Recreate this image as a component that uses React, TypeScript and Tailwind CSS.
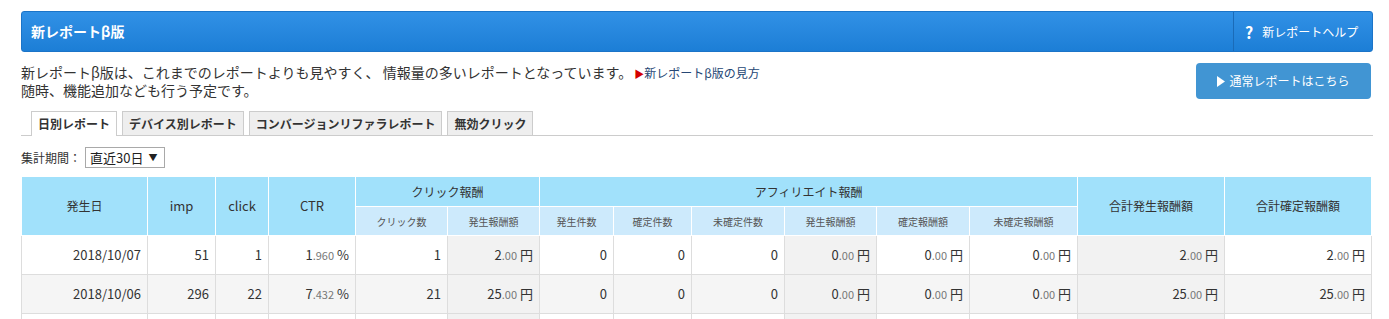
import React from "react";

type Row = {
  date: string;
  imp: string;
  click: string;
  ctr: [string, string];
  cc: string;
  cAmt: [string, string];
  a1: string;
  a2: string;
  a3: string;
  aAmt1: [string, string];
  aAmt2: [string, string];
  aAmt3: [string, string];
  tot1: [string, string];
  tot2: [string, string];
};

const rows: Row[] = [
  {
    date: "2018/10/07",
    imp: "51",
    click: "1",
    ctr: ["1", "960"],
    cc: "1",
    cAmt: ["2", "00"],
    a1: "0",
    a2: "0",
    a3: "0",
    aAmt1: ["0", "00"],
    aAmt2: ["0", "00"],
    aAmt3: ["0", "00"],
    tot1: ["2", "00"],
    tot2: ["2", "00"],
  },
  {
    date: "2018/10/06",
    imp: "296",
    click: "22",
    ctr: ["7", "432"],
    cc: "21",
    cAmt: ["25", "00"],
    a1: "0",
    a2: "0",
    a3: "0",
    aAmt1: ["0", "00"],
    aAmt2: ["0", "00"],
    aAmt3: ["0", "00"],
    tot1: ["25", "00"],
    tot2: ["25", "00"],
  },
  {
    date: "2018/10/05",
    imp: "188",
    click: "9",
    ctr: ["4", "787"],
    cc: "9",
    cAmt: ["11", "00"],
    a1: "0",
    a2: "0",
    a3: "0",
    aAmt1: ["0", "00"],
    aAmt2: ["0", "00"],
    aAmt3: ["0", "00"],
    tot1: ["11", "00"],
    tot2: ["11", "00"],
  },
];

function Num({ v, unit }: { v: [string, string]; unit: string }) {
  return (
    <span>
      {v[0]}
      <span className="text-[11px] text-[#777]">.{v[1]}</span> {unit}
    </span>
  );
}

const widths = [126, 68, 53, 87, 92, 92, 74, 78, 93, 92, 93, 108, 147, 147];

export default function App() {
  const th1 =
    "border border-white bg-[#a1e1fb] text-[12px] font-normal text-[#333] text-center align-middle";
  const th2 =
    "border border-white bg-[#cdeafc] text-[10px] font-normal text-[#555] text-center align-middle h-[29px]";
  const td = "border border-[#ddd] text-right pr-[6px] text-[13px] text-[#333] h-[39px]";

  return (
    <div className="w-[1389px] bg-white pt-[11px] pl-[21px] font-['Noto_Sans_CJK_JP',sans-serif] text-[#333]">
      <div className="w-[1352px]">
        {/* Header bar */}
        <div className="flex h-[41px] rounded-[3px] border border-[#1b74c8] bg-linear-to-b from-[#3191e6] to-[#1c7ed6]">
          <div className="flex flex-1 items-center pl-[9px] text-[14px] font-bold text-white">
            新レポートβ版
          </div>
          <div className="flex w-[139px] items-center border-l border-[#1a6bb8] pl-[11px] text-[12px] text-white">
            <span className="mr-[9px] text-[16px] font-bold">?</span>
            新レポートヘルプ
          </div>
        </div>

        {/* Intro */}
        <div className="mt-[11px] flex h-[36px] justify-between">
          <div className="text-[14px] leading-[18px] text-[#333]">
            <div className="h-[18px] whitespace-nowrap">
              新レポートβ版は、これまでのレポートよりも見やすく、 情報量の多いレポートとなっています。
              <span className="ml-[2px] text-[10px] leading-[18px] text-[#d40000]">▶</span>
              <span className="text-[12px] leading-[18px] text-[#264775]">新レポートβ版の見方</span>
            </div>
            <div className="h-[18px]">随時、機能追加なども行う予定です。</div>
          </div>
          <div className="mr-[2px] flex h-[36px] w-[175px] items-center justify-center rounded-[4px] bg-[#4195d3] text-[12px] text-white">
            <svg width="8" height="11" viewBox="0 0 8 11" className="mr-[4px]">
              <path d="M0 0 L8 5.5 L0 11 Z" fill="white" />
            </svg>
            通常レポートはこちら
          </div>
        </div>

        {/* Tabs */}
        <div className="mt-[12px] flex gap-[5px] border-b border-[#ccc] pl-[10px]">
          <div className="-mb-px flex h-[25px] items-center border border-b-0 border-[#ccc] bg-white px-[6px] text-[12px] font-bold text-[#333]">
            日別レポート
          </div>
          <div className="flex h-[24px] items-center border border-b-0 border-[#ccc] bg-[#eee] px-[6px] text-[12px] font-bold text-[#333]">
            デバイス別レポート
          </div>
          <div className="flex h-[24px] items-center border border-b-0 border-[#ccc] bg-[#eee] px-[6px] text-[12px] font-bold text-[#333]">
            コンバージョンリファラレポート
          </div>
          <div className="flex h-[24px] items-center border border-b-0 border-[#ccc] bg-[#eee] px-[6px] text-[12px] font-bold text-[#333]">
            無効クリック
          </div>
        </div>

        {/* Period */}
        <div className="mt-[11px] flex h-[21px] items-center">
          <span className="text-[12px] text-[#333]">集計期間：</span>
          <div className="ml-[4px] flex h-[21px] w-[80px] items-center border border-[#a9a9a9] pl-[4px] text-[13px] text-[#222]">
            直近30日
            <span className="ml-[5px] text-[9px]">▼</span>
          </div>
        </div>

        {/* Table */}
        <table className="mt-[8px] w-[1350px] table-fixed border-collapse border border-[#ddd]">
          <colgroup>
            {widths.map((w, i) => (
              <col key={i} style={{ width: w }} />
            ))}
          </colgroup>
          <thead>
            <tr>
              <th rowSpan={2} className={th1}>発生日</th>
              <th rowSpan={2} className={th1 + " text-[13px]"}>imp</th>
              <th rowSpan={2} className={th1 + " text-[13px]"}>click</th>
              <th rowSpan={2} className={th1 + " text-[13px]"}>CTR</th>
              <th colSpan={2} className={th1 + " h-[30px]"}>クリック報酬</th>
              <th colSpan={6} className={th1 + " h-[30px]"}>アフィリエイト報酬</th>
              <th rowSpan={2} className={th1 + " font-bold"}>合計発生報酬額</th>
              <th rowSpan={2} className={th1 + " font-bold"}>合計確定報酬額</th>
            </tr>
            <tr>
              <th className={th2}>クリック数</th>
              <th className={th2}>発生報酬額</th>
              <th className={th2}>発生件数</th>
              <th className={th2}>確定件数</th>
              <th className={th2}>未確定件数</th>
              <th className={th2}>発生報酬額</th>
              <th className={th2}>確定報酬額</th>
              <th className={th2}>未確定報酬額</th>
            </tr>
          </thead>
          <tbody>
            {rows.map((r, i) => {
              const bg = i % 2 === 1 ? "bg-[#f5f5f5]" : "bg-white";
              const grey = "bg-[#f2f2f2]";
              return (
                <tr key={r.date} className={bg}>
                  <td className={td}>{r.date}</td>
                  <td className={td}>{r.imp}</td>
                  <td className={td}>{r.click}</td>
                  <td className={td}>
                    <Num v={r.ctr} unit="%" />
                  </td>
                  <td className={td}>{r.cc}</td>
                  <td className={td + " " + grey}>
                    <Num v={r.cAmt} unit="円" />
                  </td>
                  <td className={td}>{r.a1}</td>
                  <td className={td}>{r.a2}</td>
                  <td className={td}>{r.a3}</td>
                  <td className={td + " " + grey}>
                    <Num v={r.aAmt1} unit="円" />
                  </td>
                  <td className={td}>
                    <Num v={r.aAmt2} unit="円" />
                  </td>
                  <td className={td}>
                    <Num v={r.aAmt3} unit="円" />
                  </td>
                  <td className={td + " " + grey}>
                    <Num v={r.tot1} unit="円" />
                  </td>
                  <td className={td}>
                    <Num v={r.tot2} unit="円" />
                  </td>
                </tr>
              );
            })}
          </tbody>
        </table>
      </div>
    </div>
  );
}
